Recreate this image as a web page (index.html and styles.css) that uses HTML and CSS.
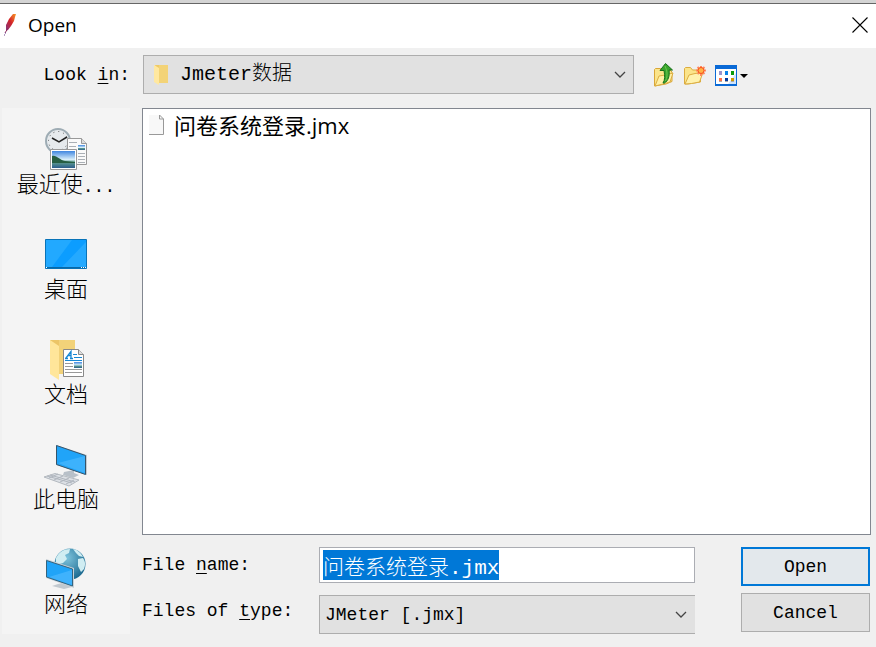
FILE: index.html
```html
<!DOCTYPE html>
<html lang="zh-CN">
<head>
    <meta charset="UTF-8">
    <meta name="viewport" content="width=device-width, initial-scale=1.0">
    <title>Open</title>
    <link rel="stylesheet" href="styles.css">
</head>
<body>
    <header class="titlebar">
        <svg class="feather" width="17" height="24" viewBox="0 0 17 24">
            <defs>
                <linearGradient id="plume" x1="1" y1="0" x2="0" y2="1">
                    <stop offset="0" stop-color="#f69923"/>
                    <stop offset=".25" stop-color="#e8612a"/>
                    <stop offset=".5" stop-color="#d22128"/>
                    <stop offset="1" stop-color="#7b3a87"/>
                </linearGradient>
            </defs>
            <path d="M13 1l3 0-1 3-1 4-3 5-3 4-2 1 0-6 3-6z" fill="url(#plume)"/>
            <path d="M8 15l-3 5" fill="none" stroke="#8e2a5c" stroke-width="1"/>
            <path d="M4 22h1M5 20h1" stroke="#6d3d8a"/>
        </svg>
        <h1 class="title">Open</h1>
        <button class="close" type="button" aria-label="Close">
            <svg width="16" height="16" viewBox="0 0 16 16"><path d="M.5.5l15 15M15.500 .5l-15 15" stroke="#000" stroke-width="1.100"/></svg>
        </button>
    </header>

    <div class="lookin">
        <label class="lookin-label" for="folder">Look <u>i</u>n:</label>
        <div class="combo combo-folder">
            <select id="folder">
                <option>Jmeter数据</option>
            </select>
            <svg class="combo-icon" width="15" height="22" viewBox="0 0 15 22">
                <path d="M1 1h13v18H4z" fill="#efca66"/>
                <path d="M5 1h9v18H5z" fill="#f3d377"/>
                <path d="M0 1l5 3v17l-5-3z" fill="#ffe8a0"/>
            </svg>
            <svg class="chevron" width="12" height="8" viewBox="0 0 12 8"><path d="M1 1l5 5 5-5" fill="none" stroke="#444" stroke-width="1.300"/></svg>
        </div>
        <div class="tools">
            <button type="button" aria-label="Up One Level">
                <svg width="22" height="26" viewBox="0 0 22 26">
                    <path d="M1.500 24V7.500l1-1h5l1.500 2h9l1 2v9L13 22z" fill="#fbe48a" stroke="#d9a637"/>
                    <path d="M2 24l4-10 6-1 8-2-3 9-7 2z" fill="#fff0a6" stroke="#dcae42"/>
                    <path d="M10 21c2-3 2-7 1-12.500H7L12.500 1.500 19.500 8H16c1 6-1 11-4.500 13z" fill="#39a52d" stroke="#18721a"/>
                    <path d="M12 4l1.500 4c1 4 .5 8-1 11" fill="none" stroke="#6cc44e"/>
                </svg>
            </button>
            <button type="button" aria-label="Create New Folder">
                <svg width="24" height="26" viewBox="0 0 24 26">
                    <path d="M1.500 22V6.500l1-1h5l2 2.500h8v12L5 22z" fill="#fbe48a" stroke="#dcac3f"/>
                    <path d="M2 22l4-9 6-1.500 8-1-3.500 9.500-8 1.500z" fill="#fff2ae" stroke="#dcae42"/>
                    <path d="M18 4v10M13 8.500h10M14.500 5l7 7M21.500 5l-7 7" stroke="#ff8a62" stroke-width="2"/>
                    <circle cx="18" cy="8.500" r="3" fill="#ffb347" stroke="#f8501c"/>
                </svg>
            </button>
            <button type="button" aria-label="View Menu">
                <svg width="34" height="26" viewBox="0 0 34 26">
                    <path d="M0 3h22v21H0z" fill="#0a6ad6"/>
                    <path d="M1 7h20v15H1z" fill="#fff"/>
                    <path d="M13 22l8-11v11z" fill="#d2e5fb"/>
                    <path d="M4 9h3v4H4z" fill="#9a94cc"/><path d="M10 9h3v4h-3z" fill="#0a82e8"/><path d="M16 9h3v4h-3z" fill="#0b9b0b"/>
                    <path d="M4 16h3v3H4z" fill="#ff7048"/><path d="M10 16h3v3h-3z" fill="#053a9c"/><path d="M16 16h3v3h-3z" fill="#d09a00"/>
                    <path d="M4 19h3v1H4zM10 19h3v1h-3zM16 19h3v1h-3z" fill="#aaa"/>
                    <path d="M25 12h8l-4 4z" fill="#000"/>
                </svg>
            </button>
        </div>
    </div>

    <main class="content">
        <nav class="places">
            <button class="place" type="button">
                <svg width="48" height="48" viewBox="0 0 48 48">
                    <defs>
                        <linearGradient id="sky" x1="0" y1="0" x2="0" y2="1">
                            <stop offset="0" stop-color="#3f86e0"/><stop offset=".5" stop-color="#d8eefa"/>
                            <stop offset=".65" stop-color="#5f9d8e"/><stop offset="1" stop-color="#2c5c8c"/>
                        </linearGradient>
                    </defs>
                    <circle cx="16" cy="16" r="12" fill="#e6eaed" stroke="#9eacb4" stroke-width="2"/>
                    <circle cx="16" cy="16" r="9.500" fill="none" stroke="#555" stroke-dasharray="1 3.970"/>
                    <path d="M10 13l7 4 8-5" fill="none" stroke="#222" stroke-width="1.500"/>
                    <path d="M25.500 13.500h14l5 5v21h-19z" fill="#fafafa" stroke="#999"/>
                    <path d="M39.500 13.500v5h5" fill="#ddd" stroke="#999"/>
                    <path d="M27 17.500h8M27 21.500h7M36 28.500h7M36 31.500h7M36 34.500h7M36 37.500h7" stroke="#aab0b6"/>
                    <path d="M36 20h7v5h-7z" fill="url(#sky)"/>
                    <path d="M8.500 24.500h26v20h-26z" fill="#fff" stroke="#999"/>
                    <path d="M10 26h23v17H10z" fill="url(#sky)"/>
                    <path d="M10 31c5-1 7 4 13 5l10 1v1H10z" fill="#275e43"/>
                </svg>
                <span>最近使<span class="dots">...</span></span>
            </button>
            <button class="place" type="button">
                <svg width="48" height="48" viewBox="0 0 48 48">
                    <path d="M3.500 9.500h41v29h-41z" fill="#0c9dff" stroke="#0873b8"/>
                    <path d="M4 10h26L10 37H4z" fill="#22a9ff"/>
                    <path d="M44 12v25H20z" fill="#35b0ff" opacity=".6"/>
                    <path d="M4 37.500h40" stroke="#0868a8"/>
                    <path d="M4 37.500h1M39 37.500h1M41 37.500h1M43 37.500h1" stroke="#fff"/>
                </svg>
                <span>桌面</span>
            </button>
            <button class="place" type="button">
                <svg width="48" height="48" viewBox="0 0 48 48">
                    <path d="M8 5h25v34H12z" fill="#ecc566"/>
                    <path d="M17 5h16v34H17z" fill="#f2d279"/>
                    <path d="M8 5l9 6v34l-9-6z" fill="#ffe69a"/>
                    <path d="M21.500 14.500h15l5 5v22h-20z" fill="#fff" stroke="#888"/>
                    <path d="M36.500 14.500v5h5" fill="#ddd" stroke="#888"/>
                    <path d="M24 23l5-6.500V23M25.500 20.500h4M23 23.500h3M28 23.500h3" fill="none" stroke="#1787d4" stroke-width="1.300"/>
                    <path d="M31 19.500h4M32 22.500h8M23 25.500h17" stroke="#1787d4"/>
                    <path d="M23 28.500h8M23 31.500h8M23 34.500h17M23 37.500h17" stroke="#999"/>
                    <path d="M32 27h8v6h-8z" fill="url(#sky)"/>
                </svg>
                <span>文档</span>
            </button>
            <button class="place" type="button">
                <svg width="48" height="48" viewBox="0 0 48 48">
                    <path d="M22 32l10-2v3l5 2-6 3-10-3z" fill="#b8c0c8"/>
                    <path d="M14 5l31 10v20L14 25z" fill="#c4ccd2"/>
                    <path d="M14.500 5.500l29 10v19l-29-10z" fill="#20a4f8" stroke="#35546a"/>
                    <path d="M43 16v17L16 23z" fill="#52bcff" opacity=".6"/>
                    <path d="M2 37l11-3.500L37 40l-10 6z" fill="#dce0e5" stroke="#b4bac0"/>
                    <path d="M5 36l25 7M8 35l25 7M12 40l9-4M18 42l9-4M24 44l8-4M7 38l9-4" stroke="#b0b6be" stroke-width="1"/>
                </svg>
                <span>此电脑</span>
            </button>
            <button class="place" type="button">
                <svg width="48" height="48" viewBox="0 0 48 48">
                    <defs>
                        <radialGradient id="globe" cx=".4" cy=".3" r=".7">
                            <stop offset="0" stop-color="#7dc3dc"/><stop offset="1" stop-color="#1f6c92"/>
                        </radialGradient>
                    </defs>
                    <circle cx="28" cy="19" r="15.500" fill="url(#globe)"/>
                    <path d="M14 13c3-6 8-9 14-9l-1 4-4 2 2 4-4 4-7 2zM31 4c5 1 8 4 10 8l-4-1-3-3zM36 14l5-1c2 3 3 6 1 11l-3 3-3-6z" fill="#d0edf2"/>
                    <path d="M16 39l8-2 6 5-8 2-12-3z" fill="#c2c9cf"/>
                    <path d="M4 14l28 9v20L4 33z" fill="#c9d1d7"/>
                    <path d="M4.500 15.500l26 8.500v17l-26-9z" fill="#20a4f8" stroke="#35647e"/>
                    <path d="M30 25v15L7 32z" fill="#55bdff" opacity=".6"/>
                </svg>
                <span>网络</span>
            </button>
        </nav>

        <section class="browser">
            <ul class="files">
                <li class="file">
                    <svg width="18" height="22" viewBox="0 0 18 22">
                        <path d="M1 1h11l4 4v15H1z" fill="#f8f8f8"/>
                        <path d="M1 20.500h14.500V5L11.500 1v4h4" fill="none" stroke="#999"/>
                    </svg>
                    <span>问卷系统登录.jmx</span>
                </li>
            </ul>

            <form class="form">
                <div class="fields">
                    <label for="fileName">File <u>n</u>ame:</label>
                    <input class="filename" id="fileName" type="text" value="问卷系统登录.jmx" spellcheck="false" autocomplete="off">
                    <label class="type-label" for="fileType">Files of <u>t</u>ype:</label>
                    <div class="combo combo-type">
                        <select id="fileType">
                            <option>JMeter [.jmx]</option>
                        </select>
                        <svg class="chevron" width="12" height="8" viewBox="0 0 12 8"><path d="M1 1l5 5 5-5" fill="none" stroke="#444" stroke-width="1.300"/></svg>
                    </div>
                </div>
                <div class="actions">
                    <button class="btn btn-default" type="button">Open</button>
                    <button class="btn" type="button">Cancel</button>
                </div>
            </form>
        </section>
    </main>

    <script>
        // the file name starts out selected so it can be typed over
        const fileName = document.getElementById('fileName');
        fileName.focus();
        fileName.select();
    </script>
</body>
</html>
```

FILE: styles.css
```css
* {
    box-sizing: border-box;
}

body {
    margin: 0;
    min-height: 100vh;
    display: flex;
    flex-direction: column;
    background-color: #f0f0f0;
    color: #000;
    font-family: "Liberation Mono", "Noto Sans CJK SC", monospace;
    font-size: 18px;
    line-height: 26px;
    font-weight: 300;
}

button, input, select {
    font: inherit;
    color: inherit;
    margin: 0;
    padding: 0;
    border: none;
    border-radius: 0;
    background: none;
}

svg {
    display: block;
    flex: none;
}

u {
    text-underline-offset: 3px;
}

/* Title bar */
.titlebar {
    display: flex;
    align-items: center;
    height: 48px;
    padding: 0 8px 2px 0;
    border-top: 3px solid #d4d4d4;
    background-color: #fff;
    box-shadow: inset 0 1px #666;
}

.title {
    flex: 1;
    margin: 0 0 0 11px;
    font-family: "Open Sans", "Noto Sans", sans-serif;
    font-size: 19px;
    font-weight: 400;
}

/* Look in row */
.lookin {
    display: flex;
    align-items: center;
    padding: 7px 127px 14px 2px;
}

.lookin-label {
    width: 128px;
    margin-right: 13px;
    text-align: right;
}

.combo {
    display: grid;
    align-items: center;
}

.combo select, .combo svg {
    grid-area: 1 / 1;
}

.combo select {
    width: 100%;
    height: 39px;
    appearance: none;
    border: 1px solid #adadad;
    background-color: #e1e1e1;
}

.combo svg {
    pointer-events: none;
}

.combo-folder {
    flex: 1;
}

.combo-folder select {
    padding-left: 36px;
    font-size: 20px;
}

.combo-icon {
    margin-left: 11px;
}

.chevron {
    justify-self: end;
    margin-right: 8px;
}

.tools {
    display: flex;
    gap: 8px;
    margin-left: 19px;
}

/* Places and file list */
.content {
    flex: 1;
    display: flex;
    gap: 12px;
    padding: 0 5px 13px 2px;
}

.places {
    width: 128px;
    display: flex;
    flex-direction: column;
    gap: 30px;
    padding-top: 17px;
    background-color: #f4f4f4;
}

.place {
    display: flex;
    flex-direction: column;
    align-items: center;
    gap: 1px;
    font-size: 22px;
}

.dots {
    font-size: 18px;
}

.browser {
    flex: 1;
    display: flex;
    flex-direction: column;
    gap: 12px;
}

.files {
    flex: 1;
    margin: 0;
    padding: 3px 5px;
    list-style: none;
    border: 1px solid #828790;
    background-color: #fff;
}

.file {
    display: flex;
    align-items: center;
    gap: 8px;
    font-family: "Open Sans", "Noto Sans CJK SC", sans-serif;
    font-size: 22px;
    font-weight: 400;
}

/* File name, type and buttons */
.form {
    display: flex;
    align-items: flex-start;
    gap: 46px;
    padding-right: 1px;
}

.fields {
    flex: 1;
    display: grid;
    grid-template-columns: 177px 1fr;
    row-gap: 12px;
    align-items: center;
}

.type-label {
    align-self: start;
    padding-top: 3px;
}

.filename {
    width: 100%;
    height: 36px;
    padding: 0 3px;
    border: 1px solid #abadb3;
    outline: none;
    background-color: #fff;
    font-size: 21px;
}

.filename::selection {
    background-color: #0078d7;
    color: #fff;
}

.combo-type select {
    padding-left: 5px;
    border-right: none;
}

.actions {
    width: 129px;
    display: flex;
    flex-direction: column;
    gap: 7px;
}

.btn {
    height: 39px;
    border: 1px solid #adadad;
    background-color: #e1e1e1;
}

.btn-default {
    border: 2px solid #0078d7;
    background-color: #e3e8ec;
}
```
